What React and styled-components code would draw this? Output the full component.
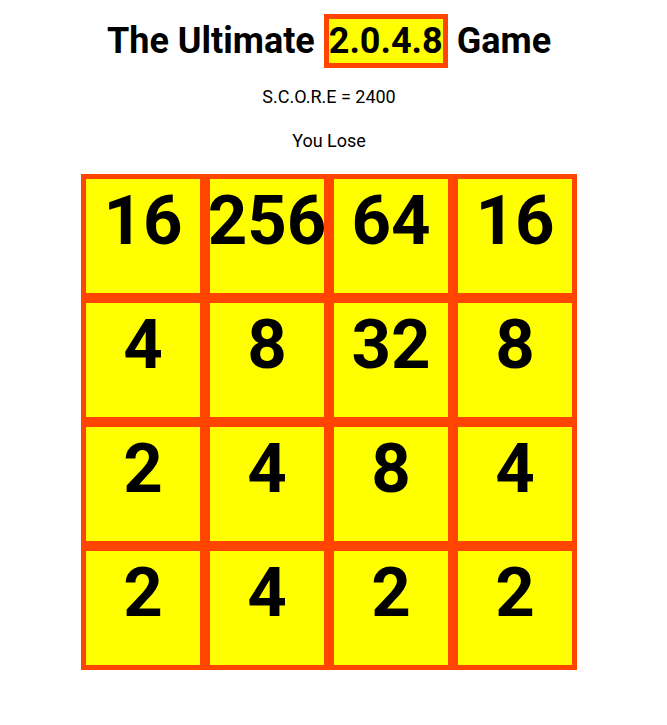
import React from 'react';
import styled, { createGlobalStyle } from 'styled-components';

const board = [
  [16, 256, 64, 16],
  [4, 8, 32, 8],
  [2, 4, 8, 4],
  [2, 4, 2, 2],
];

const App = () => {
  const score = 2400;

  return (
    <>
      <GlobalStyle />
      <S_Page>
        <S_Title>
          The Ultimate <S_Version>2.0.4.8</S_Version> Game
        </S_Title>
        <S_Score>S.C.O.R.E = {score}</S_Score>
        <S_Status>You Lose</S_Status>
        <S_Board>
          {board.flat().map((value, i) => (
            <S_Cell key={i}>{value}</S_Cell>
          ))}
        </S_Board>
      </S_Page>
    </>
  );
};

export default App;

const GlobalStyle = createGlobalStyle`
  body {
    margin: 0;
    background: #ffffff;
    font-family: Roboto, "Liberation Sans", sans-serif;
    color: #000000;
  }
`;

const S_Page = styled.div`
  width: 658px;
  padding-top: 20px;
  display: flex;
  flex-direction: column;
  align-items: center;
  text-align: center;
`;

const S_Title = styled.h1`
  margin: 0 0 24px;
  font-size: 36px;
  font-weight: 700;
  line-height: normal;
  white-space: nowrap;
`;

const S_Version = styled.span`
  background: #ffff00;
  border: 5px solid #ff4500;
  padding: 1px 0;
`;

const S_Score = styled.p`
  margin: 0 0 23px;
  font-size: 18px;
  line-height: normal;
`;

const S_Status = styled.p`
  margin: 0 0 23px;
  font-size: 18px;
  line-height: normal;
`;

const S_Board = styled.div`
  display: grid;
  grid-template-columns: repeat(4, 124px);
  grid-auto-rows: 124px;
`;

const S_Cell = styled.div`
  box-sizing: border-box;
  background: #ffff00;
  border: 5px solid #ff4500;
  padding-top: 1px;
  font-size: 69px;
  font-weight: 700;
  line-height: normal;
  text-align: center;
  white-space: nowrap;
  display: flex;
  justify-content: center;
`;
